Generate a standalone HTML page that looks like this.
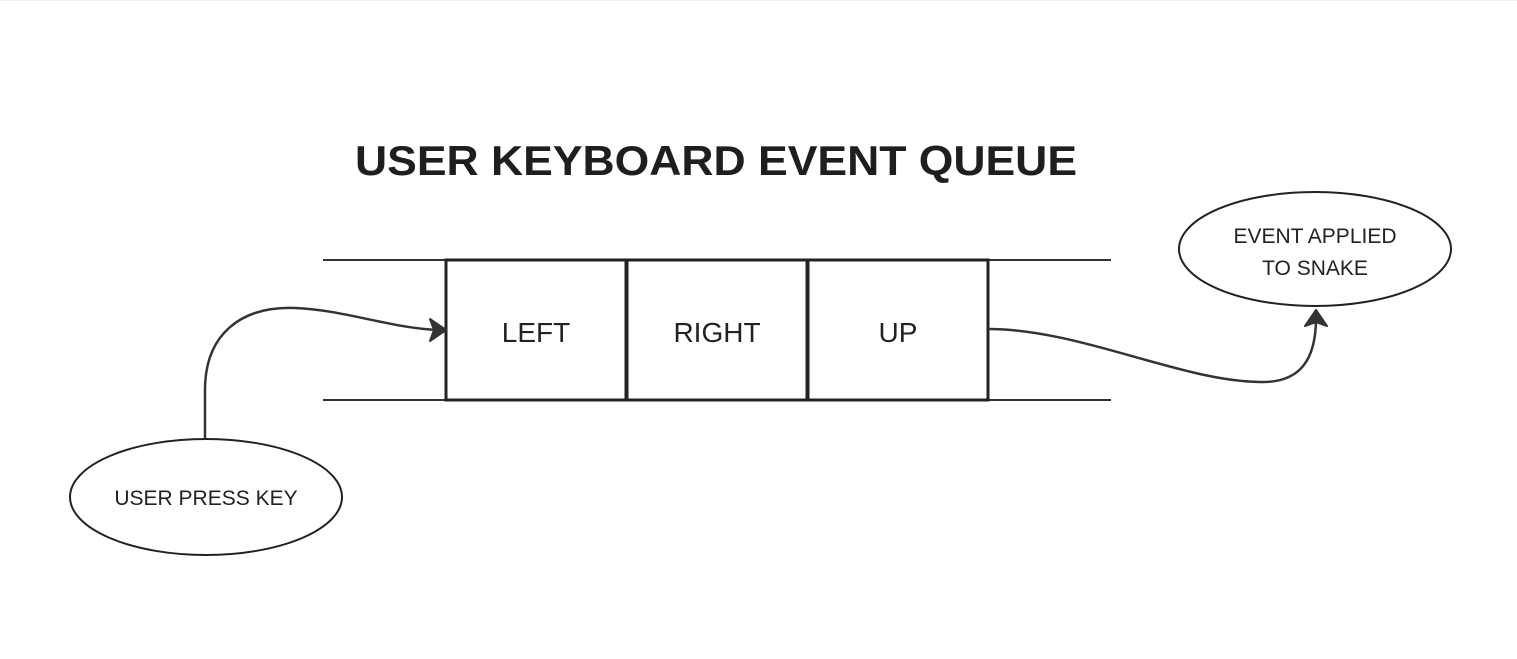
<!DOCTYPE html>
<html><head><meta charset="utf-8"><style>
html,body{margin:0;padding:0;background:#fff;}
svg{display:block}
text{font-family:"Liberation Sans",sans-serif;fill:#222}
</style></head><body>
<svg width="1517" height="659" viewBox="0 0 1517 659" xmlns="http://www.w3.org/2000/svg">
<rect width="1517" height="659" fill="#fff"/>
<line x1="0" y1="0.5" x2="1517" y2="0.5" stroke="#eee"/>
<text x="716" y="175" font-size="42" font-weight="bold" text-anchor="middle" textLength="722" lengthAdjust="spacingAndGlyphs" style="fill:#1e1e1e">USER KEYBOARD EVENT QUEUE</text>
<g stroke="#333" stroke-width="2" fill="none">
<line x1="323" y1="260" x2="446" y2="260"/>
<line x1="323" y1="400" x2="446" y2="400"/>
<line x1="988" y1="260" x2="1111" y2="260"/>
<line x1="988" y1="400" x2="1111" y2="400"/>
</g>
<g stroke="#222" stroke-width="3" fill="none">
<rect x="446" y="260" width="180" height="140"/>
<rect x="627" y="260" width="180" height="140"/>
<rect x="808" y="260" width="180" height="140"/>
</g>
<text x="536" y="342" font-size="28" text-anchor="middle">LEFT</text>
<text x="717" y="342" font-size="28" text-anchor="middle">RIGHT</text>
<text x="898" y="342" font-size="28" text-anchor="middle">UP</text>
<g stroke="#333" stroke-width="2.5" fill="none">
<path d="M205 438 L205 390 C205 335 240 306 295 308 C345 310 390 328 438 330"/>
<path d="M988 329 C1080 329 1180 381 1260 382 C1300 383 1316 360 1316 318"/>
</g>
<path d="M446 330 L430 319 L434 330 L430 341 Z" fill="#333" stroke="#333" stroke-width="2" stroke-linejoin="round"/>
<path d="M1316 310 L1305 326 L1316 322 L1327 326 Z" fill="#333" stroke="#333" stroke-width="2" stroke-linejoin="round"/>
<g stroke="#222" stroke-width="2" fill="none">
<ellipse cx="206" cy="497" rx="136" ry="58"/>
<ellipse cx="1315" cy="249" rx="136" ry="57"/>
</g>
<text x="206" y="505" font-size="21" text-anchor="middle">USER PRESS KEY</text>
<text x="1315" y="243" font-size="21" text-anchor="middle">EVENT APPLIED</text>
<text x="1315" y="275" font-size="21" text-anchor="middle">TO SNAKE</text>
</svg>
</body></html>
